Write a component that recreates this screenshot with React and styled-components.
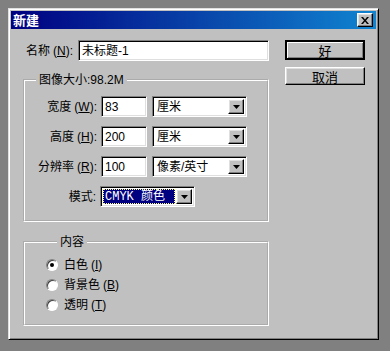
import React from "react";
import styled, { createGlobalStyle } from "styled-components";

const GlobalStyle = createGlobalStyle`
  body {
    margin: 0;
    background: #808080;
    font-family: "Liberation Sans", "Noto Sans CJK SC", sans-serif;
    font-size: 12px;
    color: #000;
  }
`;

const Window = styled.div`
  margin: 8px 0 0 8px;
  width: 371px;
  height: 332px;
  box-sizing: border-box;
  padding: 2px;
  background: #c0c0c0;
  border: 1px solid;
  border-color: #dfdfdf #000 #000 #dfdfdf;
  box-shadow: inset 1px 1px #fff, inset -1px -1px #808080;
`;

const TitleBar = styled.div`
  height: 18px;
  display: flex;
  align-items: center;
  justify-content: space-between;
  padding: 0 3px 0 2px;
  background: linear-gradient(90deg, #000080, #1084d0);
`;

const Title = styled.span`
  color: #fff;
  font-family: "Noto Sans CJK SC", sans-serif;
  font-size: 13px;
  font-weight: bold;
  line-height: 18px;
`;

const raised = `
  background: #c0c0c0;
  border: 1px solid;
  border-color: #fff #000 #000 #fff;
  box-shadow: inset -1px -1px #808080, inset 1px 1px #dfdfdf;
  box-sizing: border-box;
`;

const sunken = `
  background: #fff;
  border: 1px solid;
  border-color: #808080 #fff #fff #808080;
  box-shadow: inset 1px 1px #000, inset -1px -1px #dfdfdf;
  box-sizing: border-box;
`;

const CloseButton = styled.div`
  ${raised}
  width: 16px;
  height: 14px;
  display: flex;
  align-items: center;
  justify-content: center;
`;

const Body = styled.div`
  display: flex;
  gap: 16px;
  padding: 11px 0 0 12px;
`;

const LeftColumn = styled.div`
  width: 246px;
  display: flex;
  flex-direction: column;
`;

const RightColumn = styled.div`
  width: 80px;
  display: flex;
  flex-direction: column;
  gap: 7px;
`;

const NameRow = styled.div`
  display: flex;
  align-items: center;
  height: 21px;
`;

const Label = styled.span`
  white-space: nowrap;
  line-height: 14px;
  ${({ $width }) => $width && `width: ${$width}px; text-align: right; padding-right: 4px; box-sizing: border-box;`}
  ${({ $pad }) => $pad && `padding-left: ${$pad}px;`}
`;

const Key = styled.span`
  margin-left: 3px;
  u {
    text-decoration: underline;
  }
`;

const Field = styled.div`
  ${sunken}
  width: ${({ $width }) => $width}px;
  height: 21px;
  margin-left: ${({ $push }) => ($push ? "auto" : "0")};
  padding: 3px 3px 0;
  line-height: 15px;
  white-space: nowrap;
`;

const Group = styled.fieldset`
  margin: ${({ $top }) => $top}px 0 0;
  padding: ${({ $pad }) => $pad};
  border: 2px groove #fff;
  min-width: 0;
`;

const Legend = styled.legend`
  margin-left: 11px;
  padding: 0 3px;
  line-height: 14px;
`;

const Rows = styled.div`
  display: flex;
  flex-direction: column;
  gap: 9px;
`;

const Row = styled.div`
  display: flex;
  align-items: center;
  height: 21px;
`;

const Select = styled.div`
  ${sunken}
  width: ${({ $width }) => $width}px;
  height: 21px;
  margin-left: ${({ $gap }) => $gap || 0}px;
  padding: 2px;
  display: flex;
  align-items: stretch;
`;

const SelectValue = styled.div`
  flex: 1;
  padding: 1px 2px 0;
  line-height: 15px;
  white-space: nowrap;
  ${({ $active }) =>
    $active &&
    `
    background: #000080;
    color: #fff;
    outline: 1px dotted #ffff80;
    outline-offset: -1px;
    margin-right: 1px;
    font-family: "Liberation Mono", "Noto Sans CJK SC", monospace;
  `}
`;

const ArrowButton = styled.div`
  ${raised}
  width: 16px;
  display: flex;
  align-items: center;
  justify-content: center;
`;

const RadioRow = styled.div`
  display: flex;
  align-items: center;
  gap: 6px;
  height: 20px;
`;

const RadioDot = styled.span`
  width: 12px;
  height: 12px;
  border-radius: 50%;
  background: #fff;
  border: 1px solid;
  border-color: #808080 #fff #fff #808080;
  box-shadow: inset 1px 1px #404040;
  box-sizing: border-box;
  display: flex;
  align-items: center;
  justify-content: center;

  &::after {
    content: "";
    width: 4px;
    height: 4px;
    border-radius: 50%;
    background: ${({ $checked }) => ($checked ? "#000" : "transparent")};
  }
`;

const Button = styled.div`
  ${raised}
  height: ${({ $default }) => ($default ? 20 : 18)}px;
  display: flex;
  align-items: center;
  justify-content: center;
  font-family: "Noto Sans CJK SC", sans-serif;
  font-size: 13px;
  ${({ $default }) =>
    $default &&
    `
    border: 2px solid #000;
    box-shadow: inset 1px 1px #fff, inset -1px -1px #808080;
  `}
`;

const Arrow = () => (
  <svg width="7" height="4" viewBox="0 0 7 4">
    <path d="M0 0h7L3.5 4z" fill="#000" />
  </svg>
);

const Dropdown = ({ value, width, gap, active }) => (
  <Select $width={width} $gap={gap}>
    <SelectValue $active={active}>{value}</SelectValue>
    <ArrowButton>
      <Arrow />
    </ArrowButton>
  </Select>
);

const Mnemonic = ({ k, colon }) => (
  <Key>
    (<u>{k}</u>){colon ? ":" : ""}
  </Key>
);

const sizeRows = [
  { label: "宽度", key: "W", value: "83", unit: "厘米" },
  { label: "高度", key: "H", value: "200", unit: "厘米" },
  { label: "分辨率", key: "R", value: "100", unit: "像素/英寸" },
];

const fills = [
  { label: "白色", key: "I", checked: true },
  { label: "背景色", key: "B" },
  { label: "透明", key: "T" },
];

export default function App() {
  return (
    <>
      <GlobalStyle />
      <Window>
        <TitleBar>
          <Title>新建</Title>
          <CloseButton>
            <svg width="8" height="7" viewBox="0 0 8 7">
              <path d="M0 0h2l2 2.5L6 0h2L5 3.5 8 7H6L4 4.5 2 7H0l3-3.5z" fill="#000" />
            </svg>
          </CloseButton>
        </TitleBar>
        <Body>
          <LeftColumn>
            <NameRow>
              <Label $pad={3}>
                名称<Mnemonic k="N" colon />
              </Label>
              <Field $width={191} $push>
                未标题-1
              </Field>
            </NameRow>

            <Group $top={12} $pad="9px 0 13px">
              <Legend>图像大小:98.2M</Legend>
              <Rows>
                {sizeRows.map((r) => (
                  <Row key={r.key}>
                    <Label $width={76}>
                      {r.label}
                      <Mnemonic k={r.key} colon />
                    </Label>
                    <Field $width={46}>{r.value}</Field>
                    <Dropdown value={r.unit} width={95} gap={5} />
                  </Row>
                ))}
                <Row>
                  <Label $width={75}>模式:</Label>
                  <Dropdown value="CMYK 颜色" width={95} active />
                </Row>
              </Rows>
            </Group>

            <Group $top={13} $pad="6px 0 9px 21px">
              <Legend>内容</Legend>
              {fills.map((f) => (
                <RadioRow key={f.label}>
                  <RadioDot $checked={f.checked} />
                  <Label>
                    {f.label}
                    <Mnemonic k={f.key} />
                  </Label>
                </RadioRow>
              ))}
            </Group>
          </LeftColumn>

          <RightColumn>
            <Button $default>好</Button>
            <Button>取消</Button>
          </RightColumn>
        </Body>
      </Window>
    </>
  );
}
